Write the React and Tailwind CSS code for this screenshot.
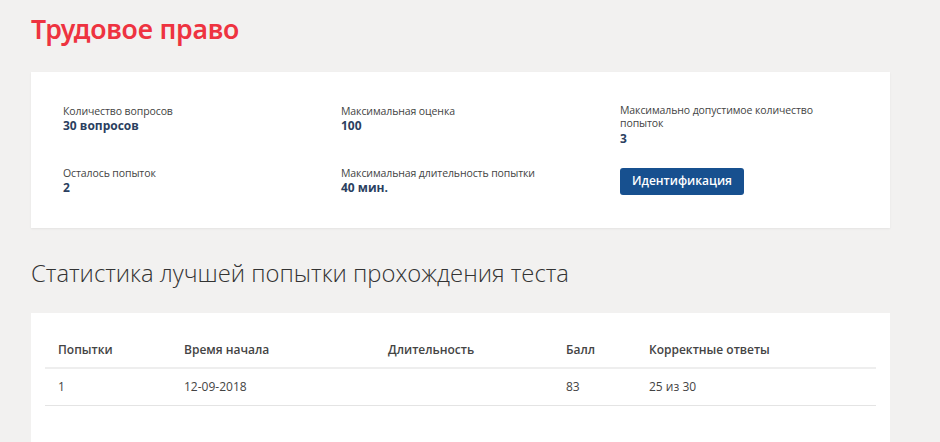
export default function App() {
  const label = "text-[10.5px] leading-[14px] tracking-[-0.1px] text-[#444]";
  return (
    <div className="min-h-[442px] w-[940px] bg-[#f2f1f0] pl-[31px] pr-[50px] pt-[11px] font-['Open_Sans',sans-serif]">
      <h1 className="text-[26.6px] font-semibold leading-[36px] tracking-[-0.2px] text-[#ee3340] font-['Noto_Sans',sans-serif]">
        Трудовое право
      </h1>
      <div className="mt-[25px] h-[156px] bg-white pl-[32px] pt-[32px] shadow-[0_1px_2px_rgba(0,0,0,0.06)]">
        <div className="grid grid-cols-[278px_279px_250px] gap-y-[20px]">
          <div>
            <div className="text-[10.5px] leading-[14px] tracking-[-0.1px] text-[#444]">Количество вопросов</div>
            <div className="text-[12px] font-bold leading-[16px] text-[#2b3f60]">30 вопросов</div>
          </div>
          <div>
            <div className="text-[10.5px] leading-[14px] tracking-[-0.1px] text-[#444]">Максимальная оценка</div>
            <div className="text-[12px] font-bold leading-[16px] text-[#2b3f60]">100</div>
          </div>
          <div>
            <div className="w-[205px] text-[10.5px] leading-[13px] tracking-[-0.1px] text-[#444]">Максимально допустимое количество попыток</div>
            <div className="mt-[1px] text-[12px] font-bold leading-[15px] text-[#2b3f60]">3</div>
          </div>
          <div>
            <div className="text-[10.5px] leading-[14px] tracking-[-0.1px] text-[#444]">Осталось попыток</div>
            <div className="text-[12px] font-bold leading-[16px] text-[#2b3f60]">2</div>
          </div>
          <div>
            <div className="text-[10.5px] leading-[14px] tracking-[-0.1px] text-[#444]">Максимальная длительность попытки</div>
            <div className="text-[12px] font-bold leading-[16px] text-[#2b3f60]">40 мин.</div>
          </div>
          <div className="mt-[1px]">
            <button className="h-[27px] rounded-[3px] bg-[#17508f] px-[12px] text-[12px] font-semibold text-white">
              Идентификация
            </button>
          </div>
        </div>
      </div>
      <h2 className="mt-[30px] text-[23.8px] font-light leading-[30px] text-[#333]">
        Статистика лучшей попытки прохождения теста
      </h2>
      <div className="mt-[25px] h-[140px] bg-white px-[14px] pt-[28px]">
        <div className="grid grid-cols-[126px_204px_178px_83px_1fr] border-b-2 border-[#eeeeee] pb-[8px] text-[12px] font-semibold leading-[18px] text-[#444]">
          <div className="pl-[13px]">Попытки</div>
          <div className="pl-[13px]">Время начала</div>
          <div className="pl-[13px]">Длительность</div>
          <div className="pl-[13px]">Балл</div>
          <div className="pl-[13px]">Корректные ответы</div>
        </div>
        <div className="grid grid-cols-[126px_204px_178px_83px_1fr] border-b border-[#e4e4e4] py-[9px] text-[12px] leading-[18px] text-[#444]">
          <div className="pl-[13px]">1</div>
          <div className="pl-[13px]">12-09-2018</div>
          <div className="pl-[13px]"></div>
          <div className="pl-[13px]">83</div>
          <div className="pl-[13px]">25 из 30</div>
        </div>
      </div>
    </div>
  );
}
